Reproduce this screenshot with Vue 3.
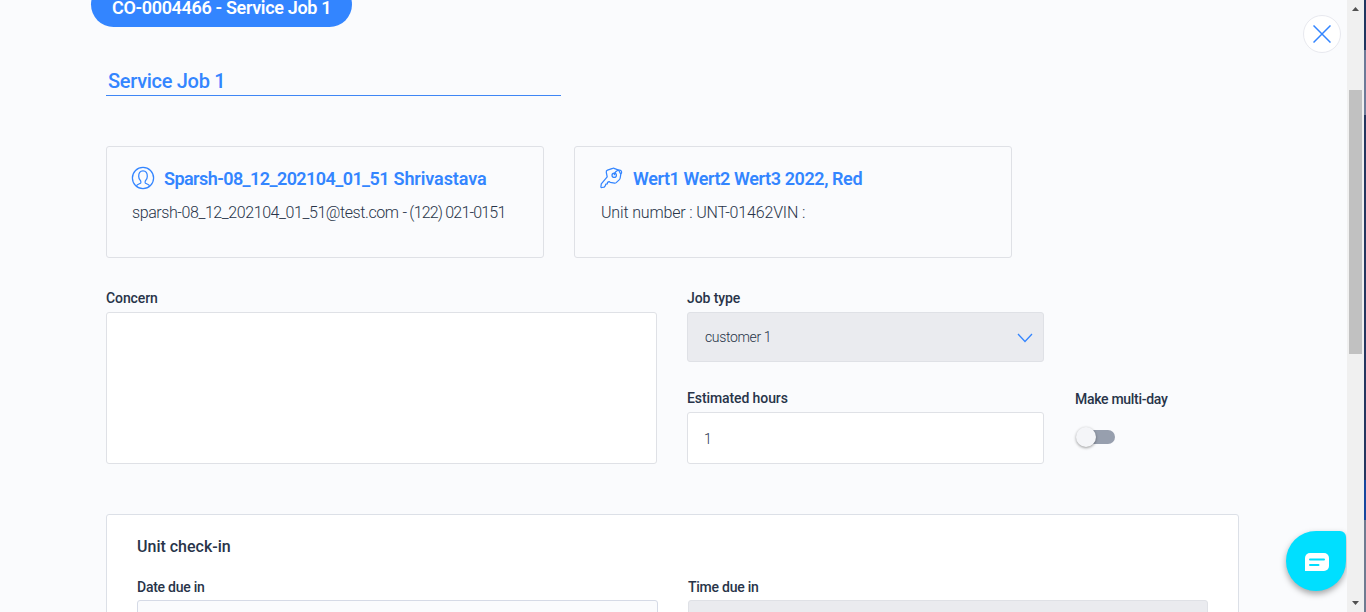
<script setup>
const contacts = [
  {
    kind: 'user',
    title: ['Sparsh-08_12_202104_01_51', 'Shrivastava'],
    detail: ['sparsh-08_12_202104_01_51@test.com', '- (122) 021-0151']
  },
  {
    kind: 'key',
    title: ['Wert1 Wert2 Wert3', '2022, Red'],
    detail: ['Unit number :', 'UNT-01462VIN :']
  }
]
</script>

<template>
  <div class="window">
    <main class="page">
      <div class="pill"><span class="t-pill">CO-0004466 - Service Job 1</span></div>
      <div class="title"><span class="t-title">Service Job 1</span></div>

      <section class="cards">
        <article v-for="c in contacts" :key="c.kind" class="card" :class="c.kind">
          <header class="card-head">
            <svg v-if="c.kind === 'user'" class="icon" viewBox="0 0 24 24">
              <circle cx="12" cy="12" r="10.6" />
              <path d="M5.5 19.8c.5-1.600 2.600-1.600 4-2.500.6-.5.4-2.100-.2-2.900-1-1.100-1.600-2.200-1.600-3.900C7.600 6.700 9 4.900 12 4.900s4.400 1.800 4.300 5.600c0 1.700-.6 2.800-1.600 3.900-.6.8-.8 2.400-.2 2.900 1.400.9 3.500.9 4 2.500" />
            </svg>
            <svg v-else class="icon" viewBox="0 0 24 24">
              <path d="M13.700 2.300 8.500 4.200Q7 4.800 7.300 6.300L8.200 10.800 2.300 17.800 1.900 20.800Q2 21.600 3 21.500L5.200 21.200 6.400 19.600 6.800 18.200 8.300 17.900 8.500 16.400 10.100 15.600 11.200 16.300 15.600 17.200Q16.400 17.300 17.200 16.600L20.400 13.600Q21 13 21.200 12L21.800 8.200 19.700 4.200 15 2.300Q14.300 2 13.700 2.300z" />
              <circle cx="15.200" cy="9.200" r="2.200" />
              <path d="M15.200 9.200c.2-2.800 2.800-5.300 5.500-5 2 .2 2.400 2.200 1.300 3.700" />
            </svg>
            <h2><span class="a">{{ c.title[0] }}</span>{{ ' ' }}<span class="b">{{ c.title[1] }}</span></h2>
          </header>
          <p><span class="a">{{ c.detail[0] }}</span>{{ ' ' }}<span class="b">{{ c.detail[1] }}</span></p>
        </article>
      </section>

      <section class="form">
        <div class="field concern">
          <label><span class="t-concern">Concern</span></label>
          <div class="box area"></div>
        </div>
        <div class="column">
          <div class="field">
            <label><span class="t-type">Job type</span></label>
            <div class="box select">
              <span class="t-customer">customer 1</span>
              <svg class="chevron" viewBox="0 0 16 10"><path d="M1 1l7 7.500L15 1" /></svg>
            </div>
          </div>
          <div class="field hours">
            <label><span class="t-hours">Estimated hours</span></label>
            <div class="box input"><span class="t-one">1</span></div>
          </div>
        </div>
        <div class="multi">
          <label><span class="t-multi">Make multi-day</span></label>
          <div class="switch"><i class="track"></i><i class="knob"></i></div>
        </div>
      </section>

      <section class="panel">
        <h3><span class="t-check">Unit check-in</span></h3>
        <div class="row">
          <div class="field">
            <label><span class="t-date">Date due in</span></label>
            <div class="box date"></div>
          </div>
          <div class="field">
            <label><span class="t-time">Time due in</span></label>
            <div class="box time"></div>
          </div>
        </div>
      </section>

      <button class="close" aria-label="Close">
        <svg viewBox="0 0 18 18"><path d="M.5.5l17 17M17.500.5l-17 17" /></svg>
      </button>
      <button class="chat" aria-label="Chat">
        <svg viewBox="0 0 24 18">
          <path class="bubble" d="M5 0h14a5 5 0 0 1 5 5v8a5 5 0 0 1-5 5H0V5a5 5 0 0 1 5-5z" />
          <path class="lines" d="M5 6.500h14M5 12h8.500" />
        </svg>
      </button>
    </main>
    <aside class="scrollbar">
      <svg class="arrow" viewBox="0 0 7 4"><path d="M0 4 3.500 0 7 4z" /></svg>
      <div class="thumb"></div>
      <svg class="arrow" viewBox="0 0 7 4"><path d="M0 0h7L3.500 4z" /></svg>
    </aside>
    <aside class="edge"></aside>
  </div>
</template>

<style>
html, body { margin: 0; overflow: hidden; }
</style>

<style scoped>
* { box-sizing: border-box; margin: 0; }
.window { display: flex; width: 1366px; height: 612px; overflow: hidden; background: #fafbfd; color: #283449; font-family: Roboto, "Liberation Sans", sans-serif; }
.page { position: relative; flex: 1; height: 612px; overflow: hidden; padding-left: 106px; }
span { white-space: nowrap; }
.pill { width: 261px; height: 45px; margin: -18px 0 0 -15px; padding-left: 21px; border-radius: 23px; background: #3385ff; color: #fff; font-size: 18px; font-weight: 600; line-height: 52px; letter-spacing: -.34px; }
.title { width: 455px; height: 30px; margin-top: 39px; padding-left: 2px; border-bottom: 1px solid #3e86f5; color: #3385ff; font-size: 20px; font-weight: 500; line-height: 30px; letter-spacing: -.3px; }
.cards { display: flex; gap: 30px; margin-top: 50px; }
.card { width: 438px; height: 112px; padding: 20px 25px; border: 1px solid #dfe1e6; border-radius: 3px; }
.card-head { display: flex; gap: 9px; height: 24px; color: #3385ff; }
.icon { width: 24px; height: 24px; margin-left: -1px; margin-top: -1px; fill: none; stroke: #3385ff; stroke-width: 1.25; stroke-linejoin: round; }
h2 { font-size: 18px; font-weight: 600; line-height: 23px; white-space: nowrap; }
p { margin-top: 9px; font-size: 16px; font-weight: 300; line-height: 26px; white-space: nowrap; }
.user h2 .a { letter-spacing: -.57px; }
.user h2 .b { letter-spacing: -.1px; }
.user p .a { letter-spacing: -.42px; }
.user p .b { letter-spacing: -.82px; }
.key h2 { padding-left: 1px; letter-spacing: -.4px; }
.key p { padding-left: 1px; letter-spacing: -.16px; }
.form { display: flex; gap: 30px; margin-top: 30px; }
label { display: block; height: 24px; font-size: 14px; font-weight: 500; line-height: 21px; }
.t-concern, .t-type, .t-hours { letter-spacing: -.1px; }
.t-customer { letter-spacing: -.35px; }
.t-multi { letter-spacing: -.3px; }
.t-date, .t-time { letter-spacing: -.25px; }
.box { border: 1px solid #dfe1e6; border-radius: 3px; background: #fff; font-size: 14px; font-weight: 300; }
.area { width: 551px; height: 152px; }
.column { width: 358px; }
.select { display: flex; align-items: center; justify-content: space-between; width: 357px; height: 50px; padding: 0 10px 0 17px; background: #eaebef; }
.chevron { width: 16px; height: 10px; margin-top: 1px; fill: none; stroke: #3385ff; stroke-width: 1.300; }
.hours { margin-top: 26px; }
.input { width: 357px; height: 52px; padding-left: 16px; line-height: 52px; }
.multi { padding-top: 101px; }
.switch { position: relative; width: 41px; height: 24px; margin-top: 12px; }
.track { position: absolute; left: 5px; top: 5px; width: 35px; height: 14px; border-radius: 7px; background: #979fae; }
.knob { position: absolute; left: 1px; top: 2px; width: 20px; height: 20px; border-radius: 50%; background: #f4f5f8; box-shadow: 0 1px 3px rgba(0, 0, 0, .4); }
.panel { width: 1133px; height: 160px; margin-top: 50px; padding: 20px 30px; border: 1px solid #dce0e7; border-radius: 3px; background: #fff; }
.panel label { line-height: 23px; }
h3 { height: 41px; font-size: 16px; font-weight: 500; line-height: 24px; }
.row { display: flex; gap: 30px; }
.date { width: 521px; height: 50px; border-color: #d5dae6; background: #fafbfd; }
.time { width: 520px; height: 50px; background: #eaebef; }
button { display: flex; align-items: center; justify-content: center; padding: 0; }
.close { position: absolute; left: 1303px; top: 15px; width: 38px; height: 38px; border: 1px solid #e8e9ef; border-radius: 50%; background: #fff; }
.close svg { width: 18px; height: 18px; fill: none; stroke: #3385ff; stroke-width: 1.500; }
.chat { position: absolute; left: 1286px; top: 531px; width: 60px; height: 60px; border: 0; border-radius: 30px 6px 30px 30px; background: #00dfff; box-shadow: 0 3px 6px rgba(0, 0, 0, .35); }
.chat svg { width: 24px; height: 18px; margin: 2px 0 0 2px; }
.bubble { fill: #fff; }
.lines { fill: none; stroke: #00dfff; stroke-width: 2; stroke-linecap: round; }
.scrollbar { display: flex; flex-direction: column; align-items: center; width: 17px; height: 612px; padding: 7px 0; background: #f0f0f0; }
.arrow { width: 7px; height: 4px; fill: #505050; }
.thumb { width: 13px; height: 264px; margin: 79px 0 247px; background: #c1c1c1; }
.edge { width: 2px; height: 612px; background: linear-gradient(#203660 50px, #6c7a98 50px 115px, #24365f 115px 480px, #17479e 480px 520px, #6f7b91 520px); }
</style>
